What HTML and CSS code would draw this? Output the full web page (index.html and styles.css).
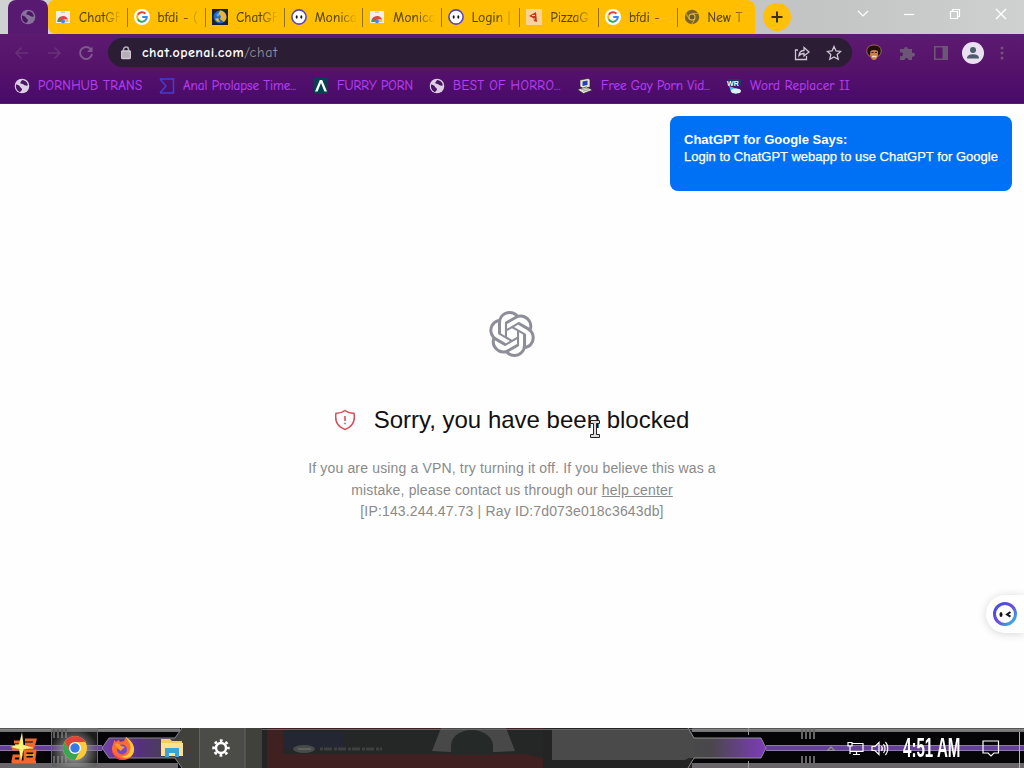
FILE: index.html
```html
<!DOCTYPE html>
<html lang="en">

<head>
  <meta charset="UTF-8">
  <meta name="viewport" content="width=device-width, initial-scale=1.0">
  <title>chat.openai.com/chat</title>
  <link rel="stylesheet" href="styles.css">
</head>

<body>
  <!-- Shared icons -->
  <svg class="defs" width="0" height="0">
    <symbol id="globe" viewBox="0 0 16 16">
      <circle cx="8" cy="8" r="7.3" fill="currentColor"/>
      <path d="M2 6.500c2 .2 3.500 1 4.200 2.500.6 1.200 2 1 1.800 2.600-.2 1.300-1.600 2.500-2.600 2.300C2.500 12.500 1.500 9.500 2 6.500zM8 2c-.4 1.500-1.800 1.800-1.600 3 .3 1.400 2.200.6 3.200 1.600.8.900 2.500 1.300 4.200 1C13.800 5 12 2.300 8 2z" fill="#4a1662"/>
    </symbol>
    <symbol id="google" viewBox="0 0 16 16">
      <circle cx="8" cy="8" r="8" fill="#fff"/>
      <g fill="none" stroke-width="2">
        <path d="M11.500 4.600A4.900 4.900 0 0 0 3.700 5.700" stroke="#ea4335"/>
        <path d="M3.700 5.700a4.900 4.900 0 0 0 0 4.600" stroke="#fbbc05"/>
        <path d="M3.700 10.300a4.900 4.900 0 0 0 7.500 1.300" stroke="#34a853"/>
        <path d="M11.200 11.600A4.800 4.800 0 0 0 12.800 8H8.200" stroke="#4285f4"/>
      </g>
    </symbol>
    <symbol id="store" viewBox="0 0 16 16">
      <path d="M1 2h14v12H1z" fill="#f5eee8"/>
      <path d="M6 2.500h4v1.300H6z" fill="#c9c4c0"/>
      <path d="M2.500 13a5.500 5.500 0 0 1 10.600-2.500H8L6 13z" fill="#dd4a3f"/>
      <path d="M2.500 13c0-1.500.5-2.500 1.200-3.400L6.500 13z" fill="#35a357"/>
      <path d="M13.100 10.500c.3.800.4 1.600.4 2.500h-4l1.300-2.500z" fill="#f7c331"/>
      <circle cx="8" cy="12.300" r="2" fill="#4285f4"/>
    </symbol>
    <symbol id="monica" viewBox="0 0 24 24">
      <linearGradient id="ring" x1="0" y1="0" x2="1" y2="1">
        <stop offset="0" stop-color="#3b50dc"/>
        <stop offset=".5" stop-color="#6c4bd6"/>
        <stop offset="1" stop-color="#28c8e8"/>
      </linearGradient>
      <circle cx="12" cy="12" r="10.500" fill="#fff" stroke="url(#ring)" stroke-width="3"/>
      <ellipse cx="8" cy="12.500" rx="1.500" ry="2.600" fill="#151515"/>
      <path d="M17.500 10l-3.500 2.500 3.500 2.200" fill="none" stroke="#151515" stroke-width="2"/>
    </symbol>
    <symbol id="monica-tab" viewBox="0 0 16 16">
      <circle cx="8" cy="8" r="7.100" fill="#fff" stroke="#5a46c8" stroke-width="1.600"/>
      <ellipse cx="5.700" cy="8" rx="1" ry="1.700" fill="#151515"/>
      <ellipse cx="10.300" cy="8" rx="1" ry="1.700" fill="#151515"/>
    </symbol>
  </svg>

  <div class="tabstrip">
    <div class="tab-active"><svg class="globe-dim" width="16" height="16"><use href="#globe"/></svg></div>
    <div class="tabs">
      <div class="tab"><svg width="16" height="16"><use href="#store"/></svg><span>ChatGF</span></div>
      <div class="tab"><svg width="16" height="16"><use href="#google"/></svg><span>bfdi - (</span></div>
      <div class="tab">
        <svg width="16" height="16" viewBox="0 0 16 16"><path d="M0 0h16v16H0z" fill="#17242f"/><circle cx="8" cy="8" r="6.500" fill="#2766c4"/><path d="M8 1.500a6.500 6.500 0 0 1 4 11.500L8 10l1-3-3-2z" fill="#e5b72d"/><path d="M3 10l3-1 2 4-3-.5z" fill="#dfc24a"/><circle cx="6" cy="6" r="1.500" fill="#58a4e3"/></svg>
        <span>ChatGF</span>
      </div>
      <div class="tab"><svg width="16" height="16"><use href="#monica-tab"/></svg><span>Monica</span></div>
      <div class="tab"><svg width="16" height="16"><use href="#store"/></svg><span>Monica</span></div>
      <div class="tab"><svg width="16" height="16"><use href="#monica-tab"/></svg><span>Login |</span></div>
      <div class="tab">
        <svg width="16" height="16" viewBox="0 0 16 16"><path d="M0 0h16v16H0z" fill="#fbd29b"/><path d="M3 7l7-4 1 10-3-1-1-3z" fill="#c5381c"/><path d="M6 6.500h3M8 9v2" stroke="#fbd29b"/></svg>
        <span>PizzaG</span>
      </div>
      <div class="tab"><svg width="16" height="16"><use href="#google"/></svg><span>bfdi -</span></div>
      <div class="tab">
        <svg width="16" height="16" viewBox="0 0 16 16"><circle cx="8" cy="8" r="7.200" fill="#7c6424"/><path d="M8 4.500h6.500M5 9.700L1.800 4.300M11 9.700L7.800 15" stroke="#c4a040" stroke-width="1.200"/><circle cx="8" cy="8" r="3.500" fill="#edc344"/><circle cx="8" cy="8" r="2.500" fill="#68582c"/></svg>
        <span>New T</span>
      </div>
    </div>
    <div class="new-tab"><svg width="12" height="12"><path d="M6 .5v11M.5 6h11" stroke="#3c3010" stroke-width="2"/></svg></div>
    <div class="window-buttons">
      <svg width="12" height="12" viewBox="0 0 12 12"><path d="M1 3l5 5 5-5"/></svg>
      <svg width="12" height="12" viewBox="0 0 12 12"><path d="M1 6.500h10"/></svg>
      <svg width="12" height="12" viewBox="0 0 12 12"><path d="M1.500 3.500h7v7h-7zM3.500 3.500v-2h7v7h-2"/></svg>
      <svg width="12" height="12" viewBox="0 0 12 12"><path d="M1 1l10 10M11 1L1 11" stroke-width="1.400"/></svg>
    </div>
  </div>

  <div class="toolbar">
    <div class="nav">
      <svg width="16" height="16" viewBox="0 0 16 16"><path d="M14 8H2.500M7.500 2.500L2 8l5.500 5.500"/></svg>
      <svg width="16" height="16" viewBox="0 0 16 16"><path d="M2 8h11.500M8.500 2.500L14 8l-5.500 5.500"/></svg>
      <svg class="reload" width="16" height="16" viewBox="0 0 16 16"><path d="M13 4.500A6 6 0 1 0 14 9"/><path d="M14.500 1.500V7H9z" fill="#7d5a8c" stroke="none"/></svg>
    </div>
    <div class="address">
      <svg width="10" height="14" viewBox="0 0 10 14"><path d="M2.500 6V3.500a2.500 2.500 0 0 1 5 0V6" fill="none" stroke="#b5aeb9" stroke-width="1.500"/><rect x=".5" y="5" width="9" height="7.500" rx="1" fill="#b5aeb9"/></svg>
      <div class="url"><b>chat.openai.com</b>/chat</div>
      <svg class="share" width="16" height="16" viewBox="0 0 16 16"><path d="M4 5H1.500v9.500h11V11M5 10.500c.3-3.500 2-5 5-5V2.500L15 7l-5 4V8.500c-2.200 0-3.800.5-5 2z"/></svg>
      <svg width="16" height="16" viewBox="0 0 16 16"><path d="M8 1.500l2 4.400 4.700.5-3.500 3.200 1 4.700L8 11.900l-4.200 2.400 1-4.700L1.300 6.400 6 5.900z"/></svg>
    </div>
    <div class="extensions">
      <svg width="16" height="18" viewBox="0 0 16 18"><path d="M1 9C0 4 3 1 8 1s8 3 7 8l-2 3H3z" fill="#21110e" stroke="#b98a63" stroke-width=".7"/><path d="M4.500 7c2-1.500 5-1.500 7.500 0v4c-.5 3-2 5-4 5s-3.500-2-4-5z" fill="#c98048"/><path d="M5.500 8.500h2M9 8.500h2" stroke="#3a1c10"/><path d="M6 12.500h4.500" stroke="#f3e2c4" stroke-width="1.500"/></svg>
      <svg width="16" height="16" viewBox="0 0 16 16"><path d="M1 4h4a2 2 0 1 1 4 0h4v4a2 2 0 1 1 0 3.500V15H9.500a2 2 0 1 0-4 0H1v-4a2 2 0 1 0 0-3.500z" fill="#6b5775"/></svg>
      <svg width="16" height="16" viewBox="0 0 16 16"><path d="M1.800 1.800h12.400v12.400H1.800z" fill="none" stroke="#6b5775" stroke-width="1.600"/><path d="M9.500 2H14v12H9.500z" fill="#6b5775"/></svg>
      <svg class="avatar" width="22" height="22" viewBox="0 0 22 22"><circle cx="11" cy="11" r="11" fill="#e9e0f1"/><circle cx="11" cy="8" r="3" fill="#4e5d6b"/><path d="M5 16.500c0-3 2.500-4.200 6-4.200s6 1.200 6 4.200z" fill="#4e5d6b"/></svg>
      <svg width="4" height="16" viewBox="0 0 4 16" fill="#75507f"><circle cx="2" cy="3" r="1.500"/><circle cx="2" cy="8" r="1.500"/><circle cx="2" cy="13" r="1.500"/></svg>
    </div>
  </div>

  <div class="bookmarks">
    <div class="bookmark pornhub"><svg width="16" height="16"><use href="#globe"/></svg><span>PORNHUB TRANS</span></div>
    <div class="bookmark time"><svg width="16" height="16" viewBox="0 0 16 16"><path d="M1 1h13.500v14H1M1 1l6 7-6 7" fill="none" stroke="#4040cf" stroke-width="1.500"/></svg><span>Anal Prolapse Time...</span></div>
    <div class="bookmark furry"><svg width="16" height="16" viewBox="0 0 16 16"><path d="M1 0h14v16H1z" fill="#093f50"/><path d="M2 13.500L6.800 2h2.400L14 13.500h-2.600L8 5l-3.400 8.500z" fill="#fff"/></svg><span>FURRY PORN</span></div>
    <div class="bookmark best"><svg width="16" height="16"><use href="#globe"/></svg><span>BEST OF HORRO...</span></div>
    <div class="bookmark free"><svg width="16" height="16" viewBox="0 0 16 16"><path d="M3 2l8-1.500 2 1v7.500l-7 1.500-3-2z" fill="#e8e6d8" stroke="#222" stroke-width=".6"/><path d="M5.500 3.500l5-1v4.500l-5 1z" fill="#2541b8"/><path d="M.5 11.500l9-2.500 6 3-9 3.500z" fill="#f0ede0" stroke="#222" stroke-width=".6"/><path d="M4 12l7-1.800M6 13.300l6-1.700" stroke="#777" stroke-width=".7"/></svg><span>Free Gay Porn Vid...</span></div>
    <div class="bookmark word"><svg width="16" height="16" viewBox="0 0 16 16"><path d="M1 1h14v7H3z" fill="#153d63"/><path d="M3 8l3 1 8 3-4 4-5-2z" fill="#4bb6e6"/><ellipse cx="10" cy="13" rx="5" ry="2.500" fill="#d9f1fc"/><text x="1" y="8" class="wr">WR</text></svg><span>Word Replacer II</span></div>
  </div>

  <main class="page">
    <div class="notice">
      <b>ChatGPT for Google Says:</b>
      <div>Login to ChatGPT webapp to use ChatGPT for Google</div>
    </div>

    <svg class="logo" width="46" height="46" viewBox="0 0 24 24"><path fill="#8e8e99" d="M22.2819 9.8211a5.9847 5.9847 0 0 0-.5157-4.9108 6.0462 6.0462 0 0 0-6.5098-2.9A6.0651 6.0651 0 0 0 4.9807 4.1818a5.9847 5.9847 0 0 0-3.9977 2.9 6.0462 6.0462 0 0 0 .7427 7.0966 5.98 5.98 0 0 0 .511 4.9107 6.051 6.051 0 0 0 6.5146 2.9001A5.9847 5.9847 0 0 0 13.2599 24a6.0557 6.0557 0 0 0 5.7718-4.2058 5.9894 5.9894 0 0 0 3.9977-2.9001 6.0557 6.0557 0 0 0-.7475-7.0729zm-9.022 12.6081a4.4755 4.4755 0 0 1-2.8764-1.0408l.1419-.0804 4.7783-2.7582a.7948.7948 0 0 0 .3927-.6813v-6.7369l2.02 1.1686a.071.071 0 0 1 .038.052v5.5826a4.504 4.504 0 0 1-4.4945 4.4944zm-9.6607-4.1254a4.4708 4.4708 0 0 1-.5346-3.0137l.142.0852 4.783 2.7582a.7712.7712 0 0 0 .7806 0l5.8428-3.3685v2.3324a.0804.0804 0 0 1-.0332.0615L9.74 19.9502a4.4992 4.4992 0 0 1-6.1408-1.6464zM2.3408 7.8956a4.485 4.485 0 0 1 2.3655-1.9728V11.6a.7664.7664 0 0 0 .3879.6765l5.8144 3.3543-2.0201 1.1685a.0757.0757 0 0 1-.071 0l-4.8303-2.7865A4.504 4.504 0 0 1 2.3408 7.872zm16.5963 3.8558L13.1038 8.364 15.1192 7.2a.0757.0757 0 0 1 .071 0l4.8303 2.7913a4.4944 4.4944 0 0 1-.6765 8.1042v-5.6772a.79.79 0 0 0-.407-.667zm2.0107-3.0231l-.142-.0852-4.7735-2.7818a.7759.7759 0 0 0-.7854 0L9.409 9.2297V6.8974a.0662.0662 0 0 1 .0284-.0615l4.8303-2.7866a4.4992 4.4992 0 0 1 6.6802 4.66zM8.3065 12.863l-2.02-1.1638a.0804.0804 0 0 1-.038-.0567V6.0742a4.4992 4.4992 0 0 1 7.3757-3.4537l-.142.0805L8.704 5.459a.7948.7948 0 0 0-.3927.6813zm1.0976-2.3654l2.602-1.4998 2.6069 1.4998v2.9994l-2.5974 1.4997-2.6067-1.4997Z"/></svg>

    <h1>
      <svg width="20" height="22" viewBox="1 0 20 22" fill="none" stroke="#d8505c" stroke-width="1.600"><path d="M11 1.500c2.500 2 5.500 2.900 9 2.800 1.300 7-.8 13.200-9 16.200C2.800 17.500.7 11.300 2 4.300c3.500.1 6.500-.8 9-2.800zM11 7v5M11 13.700v1.600"/></svg>
      <span>Sorry, you have been blocked</span>
    </h1>
    <p>If you are using a VPN, try turning it off. If you believe this was a<br>mistake, please contact us through our <a href="#">help center</a><br>[IP:143.244.47.73 | Ray ID:7d073e018c3643db]</p>

    <div class="monica"><svg width="24" height="24"><use href="#monica"/></svg></div>
    <svg class="cursor" width="12" height="20" viewBox="0 0 12 20"><path d="M1.500 1.500h9v3h-3v11h3v3h-9v-3h3v-11h-3z" fill="#ddd" stroke="#222"/></svg>
  </main>

  <div class="taskbar">
    <svg class="skin" width="1024" height="40" viewBox="0 0 1024 40">
      <defs>
        <linearGradient id="purple"><stop offset="0" stop-color="#484848"/><stop offset=".25" stop-color="#4b474d"/><stop offset="1" stop-color="#7d3cba"/></linearGradient>
        <linearGradient id="purple-left"><stop offset="0" stop-color="#7340ad"/><stop offset=".5" stop-color="#56307d"/><stop offset="1" stop-color="#45444a"/></linearGradient>
        <linearGradient id="edge" x2="0" y2="1"><stop offset="0" stop-color="#303030"/><stop offset=".3" stop-color="#868686"/><stop offset="1" stop-color="#707070"/></linearGradient>
      </defs>
      <path d="M0 0h1024v40H0z" fill="#050507"/>
      <path d="M0 0h180v4H0zM688 0h336v4H688z" fill="url(#edge)"/>
      <path d="M0 35h178v5H0zM688 35h336v5H688z" fill="#686668"/>
      <path d="M0 18h105v4H0zM765 18h259v4H765z" fill="#65419a"/>
      <path d="M0 17.500h102M0 22.500h102M765 17.500h259M765 22.500h259" stroke="#8d79a7"/>
      <path d="M182 0h80v40h-80l-7-10V10z" fill="#41413b"/>
      <path d="M102 20l7-10h66v20h-66z" fill="url(#purple-left)"/>
      <path d="M182 0l-7 10h-66l-7 10 7 10h66l7 10" fill="none" stroke="#888"/>
      <path d="M200 0h45v40h-45z" fill="#4b4b48"/>
      <path d="M199.500 0v40M245 0v40" stroke="#64645f"/>
      <path d="M262 0h430v40H262z" fill="#242424"/>
      <path d="M267 0h276v40H267z" fill="#412022"/>
      <path d="M283 1h260v29l-18-4H283z" fill="#252727"/>
      <path d="M283 4h60v17h-60z" fill="#252634"/>
      <path d="M441 0h65l9 23-17 1h-47l-19-1z" fill="#484848"/>
      <path d="M451 27V18c0-10 10-16 21-16s21 7 21 16v9z" fill="#252928"/>
      <ellipse cx="304" cy="21" rx="11" ry="4" fill="#494b4b"/>
      <path d="M298 21h13" stroke="#777"/>
      <path d="M320 21h62" stroke="#3e4040" stroke-width="3" stroke-dasharray="3 1 8 2"/>
      <path d="M552 1h136l6 9h71l-5 20h-71l-4 2H552z" fill="#4a4a4a"/>
      <path d="M694 10h67l5 10-5 10h-67z" fill="url(#purple)"/>
      <path d="M766 10v20h-5l5-10-5-10z" fill="#050507"/>
      <path d="M688 0l6 10h67l5 10-5 10h-67l-6 10" fill="none" stroke="#909090"/>
      <path d="M262 1.500h430" stroke="#666"/>
      <path d="M54 0v10M58 0v10M62 0v10M66 0v10M54 28v12M58 28v12M62 28v12M66 28v12M802 0v11M806 0v11M810 0v11M814 0v11M802 28v12M806 28v12M810 28v12M814 28v12" stroke="#666" stroke-width="2"/>
      <path d="M748.500 0v7M748.500 33v7" stroke="#999"/>
      <path d="M1019.500 4v36" stroke="#b9b0c2"/>
    </svg>
    <div class="apps">
      <div class="start"><svg width="30" height="32" viewBox="0 0 30 32"><g fill="none" stroke="#f0682a" stroke-width="3"><path d="M5 10h8M3 17h10M5 24h7l-1 5H4zM16 8h10l-2 7h-4M16 12h9M16 19h10l-1 8h-9zM3 30h24"/></g><path d="M6 13h6M18 16h6M17 23h8" stroke="#ffbc37" stroke-width="1.500"/><path d="M13 0l1.500 13 9 2.500-9 2L12 29l-2-12-9-2 9-2.500z" fill="#fff27b"/></svg></div>
      <div class="app open"><svg width="26" height="26" viewBox="0 0 26 26"><circle cx="13" cy="13" r="12" fill="#f8ca3c"/><path d="M2.600 7A12 12 0 0 0 13 25l5-9-10 0z" fill="#3ca552"/><path d="M2.600 7L8 16l5-9h10.400A12 12 0 0 0 2.600 7z" fill="#df4438"/><circle cx="13" cy="13" r="6" fill="#fff"/><circle cx="13" cy="13" r="4.700" fill="#347be5"/></svg></div>
      <div class="app"><svg width="24" height="24" viewBox="0 0 24 24"><path d="M3 4l2 2c1-1 2-2 3-2l1 2 4-1 2-4c3 2 8 6 8 12 0 7-5 11-11 11S1 19 1 13c0-4 2-5 2-9z" fill="#ff6b32"/><path d="M15 1c1 4 6 7 4 13-1 5-5 7-9 6 7 5 14-1 13-8-1-5-4-8-8-11z" fill="#ffc83d"/><circle cx="11" cy="13.500" r="5" fill="#7547cc"/><path d="M4 8c3-1 5 0 6 2l4 1c-2 2-3 2-4 4-2-1-4-3-6-7z" fill="#ff963c"/><path d="M1 13c1 6 6 10 13 10-6 3-13-2-13-10z" fill="#e7355c"/></svg></div>
      <div class="app"><svg width="22" height="20" viewBox="0 0 22 20"><path d="M0 1h9l2 2h10v15H0z" fill="#f3ce65"/><path d="M0 5h22v13H0z" fill="#fbe192"/><path d="M4 10h14v9h-4v-4H8v4H4z" fill="#39a4d8"/></svg></div>
      <div class="app"><svg width="18" height="18" viewBox="0 0 18 18" fill="none" stroke="#fff"><circle cx="9" cy="9" r="5" stroke-width="2.400"/><circle cx="9" cy="9" r="7.400" stroke-width="2.600" stroke-dasharray="2.800 3.010" stroke-dashoffset="1.400"/></svg></div>
    </div>
    <div class="tray">
      <svg width="8" height="5" viewBox="0 0 8 5"><path d="M.5 4.500L4 1l3.500 3.500z" fill="#55485f" stroke="#999"/></svg>
      <svg class="network" width="17" height="15" viewBox="0 0 17 15"><path d="M5 2.500h11v8H3V6M9.500 10.500v3M6 13.500h7M1 1.500h4V5H1zM3 5v8"/></svg>
      <svg width="18" height="15" viewBox="0 0 18 15"><path d="M1 5.500h3l4-4v12l-4-4H1zM10.500 5c1 1.500 1 3.500 0 5M12.500 3c2 2.500 2 6.500 0 9M14.500 1c3 3.500 3 9.500 0 13"/></svg>
      <div class="clock">4:51 AM</div>
      <svg width="18" height="17" viewBox="0 0 18 17"><path d="M1 1h15.500v12H12l-3 3-3-3H1z"/></svg>
    </div>
  </div>
</body>

</html>
```

FILE: styles.css
```css
* {
  box-sizing: border-box;
}

body {
  margin: 0;
  height: 100vh;
  display: flex;
  flex-direction: column;
  overflow: hidden;
  font-family: "Liberation Sans", Arial, sans-serif;
}

svg {
  display: block;
  flex: none;
}

.defs {
  position: absolute;
}

/* Browser chrome */
.tabstrip,
.toolbar,
.bookmarks {
  font-family: "Comic Sans MS", "Comic Neue", Lato, sans-serif;
  font-size: 13px;
}

.tabstrip {
  height: 34px;
  display: flex;
  background: linear-gradient(90deg, #d0d1d3, #c2c5c4 80%, #cfd0d0);
}

.tab-active {
  width: 40px;
  margin-left: 8px;
  display: flex;
  align-items: center;
  justify-content: center;
  border-radius: 8px 8px 0 0;
  background: #581a70;
}

.globe-dim {
  color: #87739a;
}

.tabs {
  width: 707px;
  display: flex;
  background: #ffbf00;
  border-radius: 6px 8px 0 8px;
}

.tab {
  flex: 1;
  min-width: 0;
  display: flex;
  align-items: center;
  padding: 0 2px 0 7px;
  position: relative;
  color: #51410f;
}

.tab + .tab::before {
  content: "";
  position: absolute;
  left: 0;
  top: 8px;
  width: 1px;
  height: 19px;
  background: #94701a;
}

.tab span {
  margin-left: 8px;
  white-space: nowrap;
  letter-spacing: 0.25px;
  -webkit-text-stroke: 0.2px;
  -webkit-mask-image: linear-gradient(90deg, #000 24px, transparent 42px);
  mask-image: linear-gradient(90deg, #000 24px, transparent 42px);
}

.new-tab {
  width: 28px;
  height: 28px;
  margin: 3px 0 0 8px;
  display: flex;
  align-items: center;
  justify-content: center;
  border-radius: 50%;
  background: #ffbf0d;
}

.window-buttons {
  flex: 1;
  display: flex;
  justify-content: flex-end;
  gap: 34px;
  padding: 8px 17px 0 0;
}

.window-buttons svg {
  fill: none;
  stroke: #fff;
  stroke-width: 1.2;
}

.toolbar {
  height: 38px;
  display: flex;
  align-items: center;
  padding: 0 20px 1px 14px;
  background: linear-gradient(#5c1a70, #541269);
}

.nav {
  width: 94px;
  display: flex;
  gap: 16px;
}

.nav svg {
  fill: none;
  stroke: #683278;
  stroke-width: 1.6;
}

.nav .reload {
  stroke: #7d5a8c;
  stroke-width: 2;
}

.address {
  width: 744px;
  height: 29px;
  display: flex;
  align-items: center;
  gap: 16px;
  padding: 0 10px 0 13px;
  border-radius: 15px;
  background: #2b1d34;
}

.address svg {
  fill: none;
  stroke: #cfc8d4;
  stroke-width: 1.3;
}

.url {
  flex: 1;
  margin-left: -5px;
  font-size: 14px;
  letter-spacing: 0.8px;
  color: #9a929f;
}

.url b {
  font-weight: 600;
  color: #fff;
  letter-spacing: 0.45px;
}

.extensions {
  flex: 1;
  display: flex;
  align-items: center;
  justify-content: space-between;
  padding: 0 0 0 14px;
}

.avatar {
  margin: 0 -1px 0 -4px;
}

.bookmarks {
  height: 32px;
  display: flex;
  align-items: center;
  padding: 0 0 4px 14px;
  border-bottom: 1px solid #56205f;
  background: linear-gradient(#54116c, #480b69);
  color: #b53ff0;
}

.bookmark {
  display: flex;
  align-items: center;
  gap: 8px;
  white-space: nowrap;
}

.bookmark span {
  -webkit-text-stroke: 0.2px;
}

.bookmark use {
  color: #dccfe5;
}

.pornhub { width: 145px; letter-spacing: 0.3px; }
.time { width: 154px; }
.furry { width: 116px; }
.best { width: 148px; letter-spacing: 0.4px; }
.free { width: 149px; }
.word { letter-spacing: 0.2px; }

.wr {
  font: bold 7px "Liberation Sans", sans-serif;
  fill: #fff;
}

/* Blocked page */
.page {
  flex: 1;
  position: relative;
  display: flex;
  flex-direction: column;
  align-items: center;
  background: #fefefe;
}

.notice {
  position: absolute;
  top: 12px;
  right: 12px;
  width: 342px;
  height: 75px;
  padding: 15px 14px;
  border-radius: 8px;
  background: #0070f5;
  color: #fff;
  font-size: 13px;
  line-height: 17px;
  white-space: nowrap;
}

.notice div {
  -webkit-text-stroke: 0.25px;
}

.logo {
  margin-top: 207px;
}

h1 {
  margin: 44px 0 0;
  display: flex;
  align-items: center;
  gap: 19px;
  font-size: 24px;
  font-weight: normal;
  line-height: 38px;
  color: #111;
}

p {
  margin: 19px 0 0;
  text-align: center;
  font-size: 14px;
  line-height: 21.5px;
  letter-spacing: 0.16px;
  color: #8a8a8a;
}

p a {
  color: inherit;
}

.monica {
  position: absolute;
  right: 0;
  top: 491px;
  width: 38px;
  height: 38px;
  padding: 7px;
  border-radius: 19px 0 0 19px;
  background: #fff;
  box-shadow: 0 1px 8px rgba(0, 0, 0, 0.16);
}

.cursor {
  position: absolute;
  left: 589px;
  top: 315px;
}

/* Taskbar */
.taskbar {
  height: 40px;
  position: relative;
  display: flex;
  justify-content: space-between;
  background: #050507;
}

.skin {
  position: absolute;
  inset: 0;
}

.apps,
.tray {
  position: relative;
  display: flex;
  align-items: center;
}

.start {
  width: 51px;
  padding-left: 9px;
}

.app {
  width: 49px;
  height: 40px;
  display: flex;
  align-items: center;
  justify-content: center;
}

.open {
  width: 47px;
  border: 1px solid #6b6b6b;
  background: radial-gradient(circle at 50% 60%, #999 15%, rgba(80, 80, 80, 0.3) 75%);
}

.tray {
  padding-right: 24px;
}

.tray svg {
  fill: none;
  stroke: #fff;
  stroke-width: 1.2;
}

.tray .network {
  margin: 0 7px 0 12px;
}

.clock {
  width: 57px;
  margin: 0 22px 0 14px;
  color: #fff;
  font: bold 28px/40px "Liberation Sans", sans-serif;
  white-space: nowrap;
  transform: scaleX(0.54);
  transform-origin: left;
}
```
